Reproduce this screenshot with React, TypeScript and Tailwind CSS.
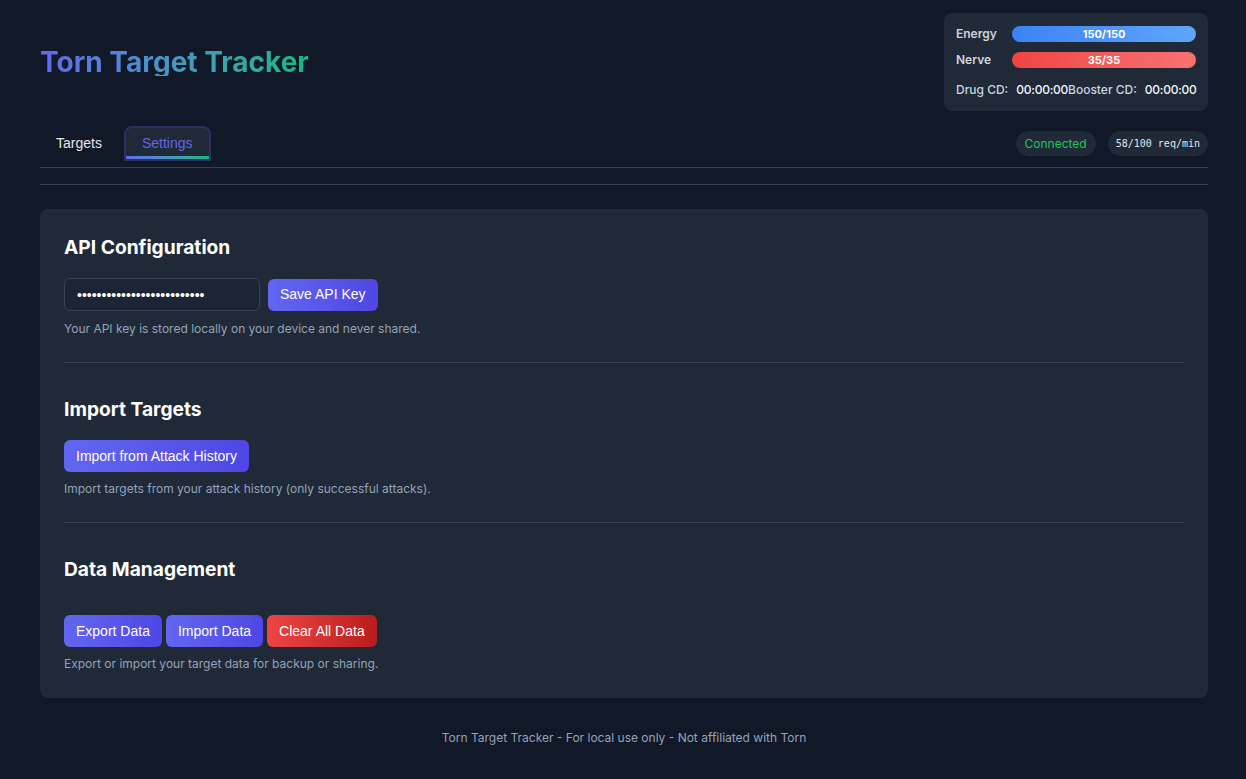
import React from "react";

const inter = { fontFamily: "Inter, 'Noto Sans', sans-serif" };

function Bar({ label, value, from, to }: { label: string; value: string; from: string; to: string }) {
  return (
    <div className="flex items-center h-4">
      <span className="w-[56px] text-[12px] leading-4 font-semibold text-[#d1d5db]">{label}</span>
      <div
        className={`h-4 w-[184px] rounded-full flex items-center justify-center text-[11px] leading-4 font-bold text-white ${from} ${to} bg-gradient-to-r`}
      >
        {value}
      </div>
    </div>
  );
}

function Btn({ children, red }: { children: React.ReactNode; red?: boolean }) {
  return (
    <button
      className={`h-8 px-3 rounded-md text-[14px] text-white bg-gradient-to-r ${
        red ? "from-[#ef4444] to-[#b91c1c]" : "from-[#6366f1] to-[#4f46e5]"
      }`}
      style={{ fontFamily: "'Liberation Sans', Arial, sans-serif" }}
    >
      {children}
    </button>
  );
}

export default function App() {
  return (
    <div className="min-h-[779px] bg-[#111827] text-white pl-10 pr-[38px]" style={inter}>
      <header className="flex items-center justify-between pt-[13px]">
        <h1 className="text-[28px] font-bold leading-none bg-gradient-to-r from-[#6366f1] to-[#10b981] bg-clip-text text-transparent">
          Torn Target Tracker
        </h1>
        <div className="w-[264px] rounded-lg bg-[#1f2937] px-3 pt-[13px] pb-3">
          <div className="flex flex-col gap-2.5">
            <Bar label="Energy" value="150/150" from="from-[#3b82f6]" to="to-[#60a5fa]" />
            <Bar label="Nerve" value="35/35" from="from-[#ef4444]" to="to-[#f87171]" />
          </div>
          <div className="mt-[13px] flex justify-between text-[12px] leading-[18px] whitespace-nowrap">
            <div className="flex gap-2">
              <span className="font-medium text-[#cbd5e1]">Drug CD:</span>
              <span className="font-medium text-[#f1f5f9] tracking-[-0.25px]">00:00:00</span>
            </div>
            <div className="flex gap-2">
              <span className="font-medium text-[#cbd5e1]">Booster CD:</span>
              <span className="font-medium text-[#f1f5f9] tracking-[-0.25px]">00:00:00</span>
            </div>
          </div>
        </div>
      </header>

      <nav className="mt-[15px] flex items-end justify-between border-b border-[#374151] pb-[6px]">
        <div className="flex items-end gap-1.5" style={{ fontFamily: "'Liberation Sans', Arial, sans-serif" }}>
          <button className="h-[35px] px-4 text-[14px] text-[#e5e7eb]">Targets</button>
          <button className="relative h-[35px] px-4 text-[14px] text-[#6366f1] bg-[#1f2937] border-2 border-[#2d2f63] rounded-t-lg">
            Settings
            <span className="absolute left-0 right-0 bottom-0 h-[3px] bg-gradient-to-r from-[#6366f1] to-[#10b981]" />
          </button>
        </div>
        <div className="flex items-center gap-3 mb-[5px]">
          <span className="h-[25px] px-[9px] flex items-center rounded-full bg-[#1f2937] text-[12px] text-[#22c55e]">
            Connected
          </span>
          <span
            className="h-[25px] px-2 flex items-center rounded-full bg-[#1f2937] text-[10px] text-[#e5e7eb]"
            style={{ fontFamily: "'DejaVu Sans Mono', monospace" }}
          >
            58/100 req/min
          </span>
        </div>
      </nav>
      <div className="mt-4 border-t border-[#374151]" />

      <main className="mt-6 rounded-lg bg-[#1f2937] p-6">
        <section className="pb-[23px] border-b border-[#374151]">
          <h2 className="text-[19.2px] font-bold leading-7 text-white">API Configuration</h2>
          <div className="mt-[17px] flex items-center gap-2">
            <input
              type="password"
              readOnly
              value="abcdefghijklmnopqrstuvwxyz"
              className="h-[33px] w-[196px] rounded-md border border-[#374151] bg-[#1c2535] px-3 text-[14px] text-white outline-none"
              style={{ fontFamily: "'Liberation Sans', Arial, sans-serif" }}
            />
            <Btn>Save API Key</Btn>
          </div>
          <p className="mt-2 text-[12px] leading-5 text-[#94a3b8]">
            Your API key is stored locally on your device and never shared.
          </p>
        </section>

        <section className="mt-8 pb-[23px] border-b border-[#374151]">
          <h2 className="text-[19.2px] font-bold leading-7 text-white">Import Targets</h2>
          <div className="mt-[17px] flex">
            <Btn>Import from Attack History</Btn>
          </div>
          <p className="mt-[7px] text-[12px] leading-5 text-[#94a3b8]">
            Import targets from your attack history (only successful attacks).
          </p>
        </section>

        <section className="mt-8">
          <h2 className="text-[19.2px] font-bold leading-7 text-white">Data Management</h2>
          <div className="mt-8 flex gap-1">
            <Btn>Export Data</Btn>
            <Btn>Import Data</Btn>
            <Btn red>Clear All Data</Btn>
          </div>
          <p className="mt-[7px] text-[12px] leading-5 text-[#94a3b8]">
            Export or import your target data for backup or sharing.
          </p>
        </section>
      </main>

      <footer className="pt-[30px] pb-6 text-center text-[12px] leading-5 text-[#94a3b8]">
        Torn Target Tracker - For local use only - Not affiliated with Torn
      </footer>
    </div>
  );
}
